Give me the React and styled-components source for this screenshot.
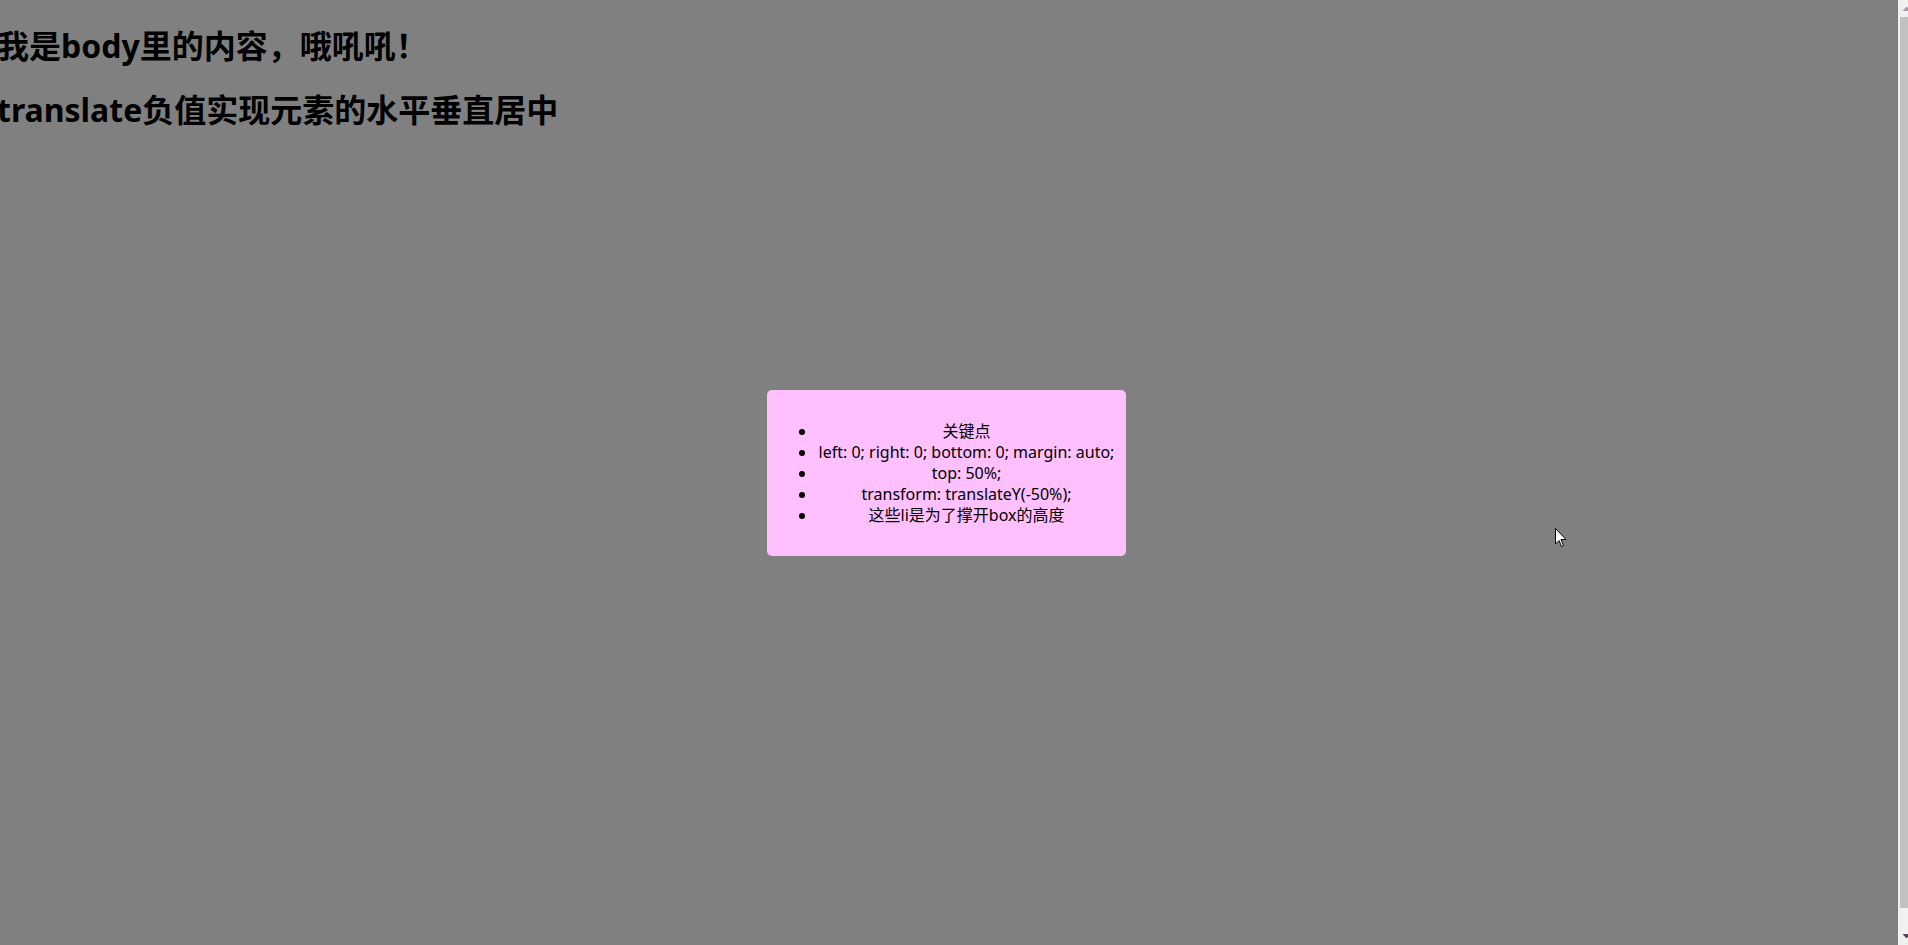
import React from "react";
import styled, { createGlobalStyle } from "styled-components";

const GlobalStyle = createGlobalStyle`
  body {
    margin: 0;
    overflow: hidden;
    background: #808080;
    font-family: "Noto Sans", "Noto Sans CJK SC", sans-serif;
    color: #000;
  }
`;

const Window = styled.div`
  display: flex;
  height: 100vh;
`;

const Page = styled.main`
  flex: 1;
  display: grid;
  grid-template: 1fr / 1fr;
`;

const Header = styled.header`
  grid-area: 1 / 1;
  align-self: start;
  padding-top: 2px;
`;

const Title = styled.h1`
  margin: 21.44px 0 21.44px -3px;
  font-size: 32px;
  line-height: 42px;
  font-weight: 700;
`;

const Cjk = styled.span`
  font-family: "Noto Sans CJK SC", sans-serif;
`;

const Box = styled.div`
  grid-area: 1 / 1;
  place-self: center;
  width: 359px;
  box-sizing: border-box;
  margin-left: -5px;
  padding: 15px 10px 14px;
  background: #ffc0ff;
  border-radius: 5px;
`;

const List = styled.ul`
  margin: 16px 0;
  padding-left: 40px;
  text-align: center;
  font-size: 16px;
  line-height: 21px;
  white-space: nowrap;
`;

/* browser scrollbar, cut off by the right edge of the capture */
const ScrollBar = styled.div`
  width: 10px;
  display: flex;
  flex-direction: column;
  background: #f1f1f1;
  overflow: hidden;
`;

const Arrow = styled.svg`
  display: block;
  flex: none;
`;

const Track = styled.div`
  flex: 1;
  display: flex;
  flex-direction: column;
  padding: 0 0 20px 2px;
`;

const Thumb = styled.div`
  flex: 1;
  background: #c1c1c1;
`;

const Cursor = styled.svg`
  position: fixed;
  left: 1555px;
  top: 528px;
  pointer-events: none;
`;

const points = [
  "关键点",
  "left: 0; right: 0; bottom: 0; margin: auto;",
  "top: 50%;",
  "transform: translateY(-50%);",
  "这些li是为了撑开box的高度",
];

export default function App() {
  return (
    <>
      <GlobalStyle />
      <Window>
        <Page>
          <Header>
            <Title>
              我是body里的内容<Cjk>，</Cjk>哦吼吼<Cjk>！</Cjk>
            </Title>
            <Title>translate负值实现元素的水平垂直居中</Title>
          </Header>
          <Box>
            <List>
              {points.map((p) => (
                <li key={p}>{p}</li>
              ))}
            </List>
          </Box>
        </Page>
        <ScrollBar>
          <Arrow width="10" height="17" viewBox="0 0 10 17">
            <path d="M4.5 11 L8.5 6.5 L12.5 11 Z" fill="#a99ca9" />
          </Arrow>
          <Track>
            <Thumb />
          </Track>
          <Arrow width="10" height="17" viewBox="0 0 10 17">
            <path d="M4.5 6 L12.5 6 L8.5 10.5 Z" fill="#4f4a4f" />
          </Arrow>
        </ScrollBar>
      </Window>
      <Cursor width="12" height="20" viewBox="0 0 12 20">
        <path
          d="M0.5 0.5 L0.5 16 L4 12.5 L6.5 18.5 L8.5 17.5 L6 11.5 L11 11.5 Z"
          fill="#fff"
          stroke="#000"
          strokeWidth="1"
        />
      </Cursor>
    </>
  );
}
